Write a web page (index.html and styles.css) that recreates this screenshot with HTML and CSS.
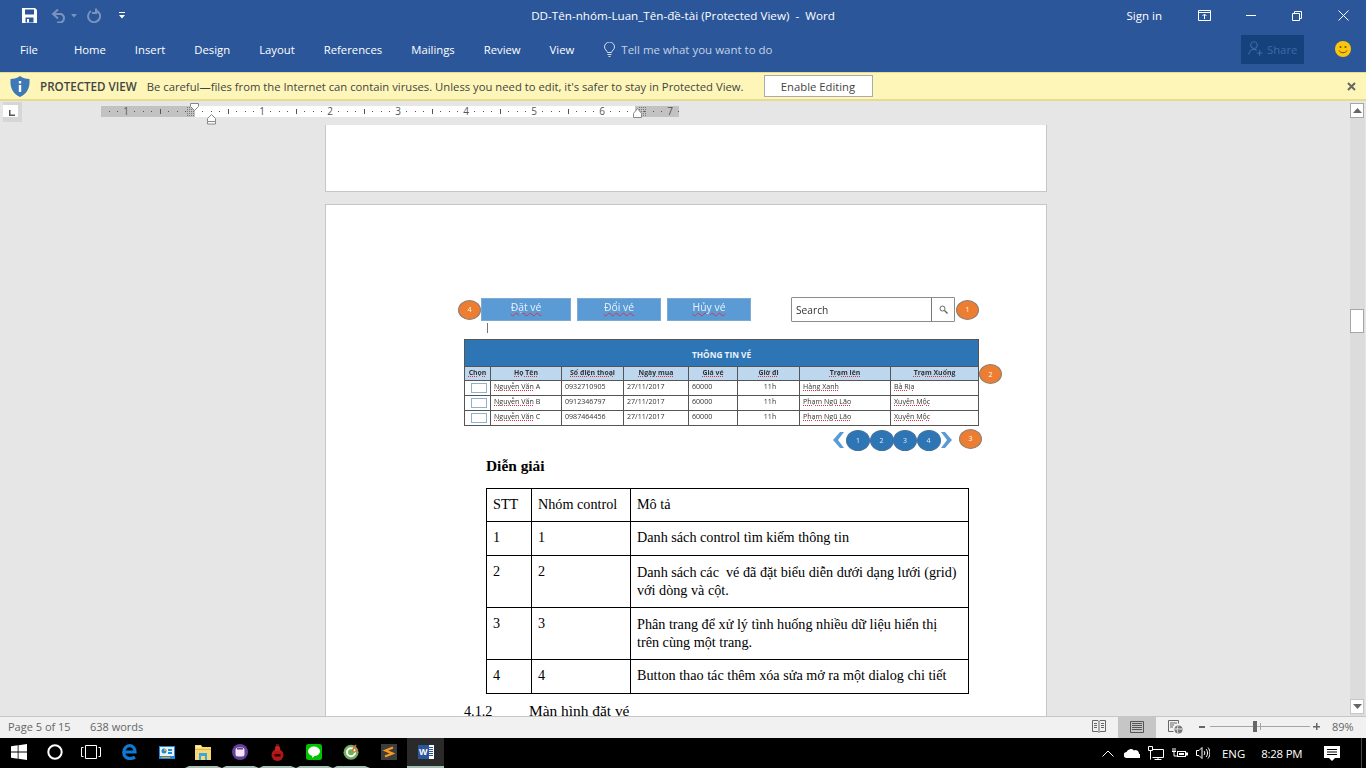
FILE: index.html
```html
<!DOCTYPE html>
<html lang="vi">
<head>
<meta charset="utf-8">
<title>DD-Tên-nhóm-Luan_Tên-đề-tài (Protected View) - Word</title>
<link rel="stylesheet" href="styles.css">
</head>
<body>
<div class="window">
  <header class="ribbon">
    <div class="titlebar">
      <div class="qat">
        <svg class="qat-save" width="15" height="15" viewBox="0 0 15 15"><path fill="#fff" d="M0 0h13l2 2v13H0z"/><path fill="#2b579a" d="M3 1.500h9v5H3zM3.500 9.500h8v5h-8z"/><path fill="#fff" d="M5 11h2v3.500H5z"/></svg>
        <svg class="qat-undo" width="16" height="15" viewBox="0 0 16 15"><path fill="none" stroke="#7a93bd" stroke-width="2" d="M7 1.500L2 6l5 4.500M2 6h8a4.500 4.500 0 0 1 0 8.500H6"/></svg>
        <svg class="qat-caret" width="6" height="4" viewBox="0 0 6 4"><path fill="#7a93bd" d="M0 0h6L3 3.500z"/></svg>
        <svg class="qat-redo" width="15" height="15" viewBox="0 0 15 15"><path fill="none" stroke="#7a93bd" stroke-width="2" d="M5 3a6 6 0 1 0 5 -.5M10 .5v4.500h-4"/></svg>
        <svg class="qat-more" width="6" height="7" viewBox="0 0 6 7"><path fill="#fff" d="M0 0h6v1H0zM0 3h6L3 6.500z"/></svg>
      </div>
      <div class="doc-title">DD-Tên-nhóm-Luan_Tên-đề-tài (Protected View)  -  Word</div>
      <div class="win-controls">
        <span class="signin">Sign in</span>
        <span class="win-btn"><svg width="14" height="11" viewBox="0 0 14 11"><path fill="none" stroke="#fff" d="M.5.500h12v10H.500zM.5 2.500h12M6.500 9V4.500M4.500 6l2-2 2 2"/></svg></span>
        <span class="win-btn"><svg width="10" height="2" viewBox="0 0 10 2"><path fill="#fff" d="M0 0h10v1H0z"/></svg></span>
        <span class="win-btn"><svg width="10" height="10" viewBox="0 0 10 10"><path fill="none" stroke="#fff" d="M.5 2.500h7v7h-7zM2.500 2.500v-2h7v7h-2"/></svg></span>
        <span class="win-btn"><svg width="11" height="11" viewBox="0 0 11 11"><path fill="none" stroke="#fff" d="M.5.500l10 10M10.500.500l-10 10"/></svg></span>
      </div>
    </div>
    <nav class="tabs">
      <span class="tab tab-file">File</span>
      <span class="tab">Home</span>
      <span class="tab">Insert</span>
      <span class="tab">Design</span>
      <span class="tab">Layout</span>
      <span class="tab">References</span>
      <span class="tab">Mailings</span>
      <span class="tab">Review</span>
      <span class="tab">View</span>
      <span class="tell">
        <svg width="11" height="15" viewBox="0 0 11 15"><path fill="none" stroke="#d5dfee" d="M3.500 10.500C3 8.500.5 7.500.5 5a5 5 0 0 1 10 0c0 2.500-2.500 3.500-3 5.500zM3.500 12.500h4M4.500 14.500h2"/></svg>
        <span>Tell me what you want to do</span>
      </span>
      <span class="share">
        <svg width="16" height="16" viewBox="0 0 20 20"><path fill="none" stroke="#3f6aa6" stroke-width="1.400" d="M7.500 1a4.200 4.200 0 1 0 .01 0zM1 17c0-4 3-6.500 6.500-6.500 1.500 0 2.500.3 3.500 1M14.500 11.500v7M11 15h7"/></svg>
        <span>Share</span>
      </span>
      <svg class="smiley" width="16" height="16" viewBox="0 0 16 16"><circle cx="8" cy="8" r="8" fill="#fcc60f"/><circle cx="5.500" cy="6" r="1" fill="#6b5200"/><circle cx="10.500" cy="6" r="1" fill="#6b5200"/><path fill="none" stroke="#6b5200" d="M4 9.500c1.500 3 6.500 3 8 0"/></svg>
    </nav>
  </header>

  <div class="protected">
    <svg class="shield" width="20" height="21" viewBox="0 0 20 21"><path fill="#3c79b6" d="M10 0c2 2 6 3 9.500 3 .5 8-1.500 14-9.500 18C2 17 0 11 .5 3 4 3 8 2 10 0z"/><path fill="#fff" d="M8.800 5h2.400v2.400H8.800zM8.800 9h2.400v7H8.800z"/></svg>
    <strong class="pv-label">PROTECTED VIEW</strong>
    <span class="pv-text">Be careful—files from the Internet can contain viruses. Unless you need to edit, it's safer to stay in Protected View.</span>
    <span class="pv-btn">Enable Editing</span>
    <svg class="pv-close" width="9" height="9" viewBox="0 0 9 9"><path fill="none" stroke="#666" stroke-width="2" d="M1 1l7 7M8 1L1 8"/></svg>
  </div>

  <div class="workspace">
    <div class="editor">
      <div class="ruler">
        <div class="ruler-corner"><svg width="6" height="6" viewBox="0 0 6 6"><path fill="#555" d="M0 0h1.500v4.500H6V6H0z"/></svg></div>
        <svg class="ruler-bar" width="600" height="24" viewBox="0 0 600 24">
          <defs>
            <pattern id="ticks" x="93" y="0" width="68" height="24" patternUnits="userSpaceOnUse">
              <rect x="8" y="10" width="1" height="1" fill="#555"/><rect x="17" y="10" width="1" height="1" fill="#555"/><rect x="25" y="10" width="1" height="1" fill="#555"/><rect x="34" y="8" width="1" height="5" fill="#555"/><rect x="42" y="10" width="1" height="1" fill="#555"/><rect x="51" y="10" width="1" height="1" fill="#555"/><rect x="59" y="10" width="1" height="1" fill="#555"/>
            </pattern>
            <pattern id="grip" width="2" height="2" patternUnits="userSpaceOnUse"><rect width="1" height="1" fill="#777"/></pattern>
          </defs>
          <rect x="0" y="5" width="578" height="11" fill="#c2c2c2"/>
          <rect x="94" y="5" width="440" height="11" fill="#fff"/>
          <rect x="0" y="5" width="578" height="11" fill="url(#ticks)"/>
          <rect x="85" y="6" width="8" height="9" fill="url(#grip)"/>
          <rect x="537" y="6" width="8" height="9" fill="url(#grip)"/>
          <g class="ruler-num">
            <text x="25" y="14">1</text><text x="161" y="14">1</text><text x="229" y="14">2</text><text x="297" y="14">3</text><text x="365" y="14">4</text><text x="433" y="14">5</text><text x="501" y="14">6</text><text x="569" y="14">7</text>
          </g>
          <path fill="#fff" stroke="#888" d="M89.500 2.500h8v3l-4 4-4-4z"/>
          <path fill="#fff" stroke="#888" d="M106.500 17.500l4-4 4 4v3h-8zM106.500 20.500v2.500h8v-2.500"/>
          <path fill="#fff" stroke="#888" d="M532.500 16.500v-4l4-5 4 5v4z"/>
        </svg>
      </div>
      <main class="doc">
        <section class="page page-prev"></section>
        <section class="page page-cur">
          <div class="mock">
            <div class="mock-tools">
              <span class="badge">4</span>
              <span class="m-btn m-btn-a"><u>Đặt vé</u></span>
              <span class="m-btn m-btn-b"><u>Đổi vé</u></span>
              <span class="m-btn m-btn-b"><u>Hủy vé</u></span>
              <span class="m-search">
                <span class="m-search-text">Search</span>
                <span class="m-search-icon"><svg width="9" height="9" viewBox="0 0 9 9"><circle cx="3.500" cy="3.500" r="2.500" fill="none" stroke="#666"/><path stroke="#666" stroke-width="1.400" d="M5.500 5.500L8.500 8.500"/></svg></span>
              </span>
              <span class="badge badge-search">1</span>
            </div>
            <div class="m-caret"></div>
            <div class="m-table-wrap">
              <table class="m-table">
                <colgroup><col class="c1"><col class="c2"><col class="c3"><col class="c4"><col class="c5"><col class="c6"><col class="c7"><col class="c8"></colgroup>
                <tr class="m-title"><th colspan="8">THÔNG TIN VÉ</th></tr>
                <tr class="m-head"><th><u>Chọn</u></th><th><u>Họ Tên</u></th><th><u>Số điện thoại</u></th><th><u>Ngày mua</u></th><th><u>Giá vé</u></th><th><u>Giờ đi</u></th><th><u>Trạm lên</u></th><th><u>Trạm Xuống</u></th></tr>
                <tr><td class="m-check"><span></span></td><td><u>Nguyễn Văn</u> A</td><td>0932710905</td><td>27/11/2017</td><td>60000</td><td class="m-center">11h</td><td><u>Hàng Xanh</u></td><td><u>Bà Rịa</u></td></tr>
                <tr><td class="m-check"><span></span></td><td><u>Nguyễn Văn</u> B</td><td>0912346797</td><td>27/11/2017</td><td>60000</td><td class="m-center">11h</td><td><u>Phạm Ngũ Lão</u></td><td><u>Xuyên Mộc</u></td></tr>
                <tr><td class="m-check"><span></span></td><td><u>Nguyễn Văn</u> C</td><td>0987464456</td><td>27/11/2017</td><td>60000</td><td class="m-center">11h</td><td><u>Phạm Ngũ Lão</u></td><td><u>Xuyên Mộc</u></td></tr>
              </table>
              <span class="badge badge-grid">2</span>
            </div>
            <div class="m-pager">
              <svg width="11" height="16" viewBox="0 0 11 16"><path fill="#5b9bd5" d="M7 0h4L5 8l6 8H7L0 8z"/></svg>
              <span class="p-dot p-first">1</span><span class="p-dot">2</span><span class="p-dot">3</span><span class="p-dot">4</span>
              <svg width="11" height="16" viewBox="0 0 11 16"><path fill="#5b9bd5" d="M4 0H0l6 8-6 8h4l7-8z"/></svg>
              <span class="badge badge-pager">3</span>
            </div>
          </div>
          <h3 class="legend-title">Diễn giải</h3>
          <table class="legend">
            <colgroup><col class="l1"><col class="l2"><col class="l3"></colgroup>
            <tr class="r33"><td>STT</td><td>Nhóm control</td><td>Mô tả</td></tr>
            <tr class="r34"><td>1</td><td>1</td><td>Danh sách control tìm kiếm thông tin</td></tr>
            <tr class="r52"><td>2</td><td>2</td><td class="low">Danh sách các  vé đã đặt biểu diễn dưới dạng lưới (grid) với dòng và cột.</td></tr>
            <tr class="r52"><td>3</td><td>3</td><td class="low">Phân trang để xử lý tình huống nhiều dữ liệu hiển thị trên cùng một trang.</td></tr>
            <tr class="r34"><td>4</td><td>4</td><td>Button thao tác thêm xóa sửa mở ra một dialog chi tiết</td></tr>
          </table>
          <h4 class="next-head"><span class="num">4.1.2</span><span class="next-name">Màn hình đặt vé</span></h4>
        </section>
      </main>
    </div>
    <aside class="scrollbar">
      <span class="sb-btn"><svg width="9" height="5" viewBox="0 0 9 5"><path fill="#666" d="M4.500 0L9 5H0z"/></svg></span>
      <span class="sb-thumb"></span>
      <span class="sb-btn sb-down"><svg width="9" height="5" viewBox="0 0 9 5"><path fill="#666" d="M0 0h9L4.500 5z"/></svg></span>
    </aside>
  </div>

  <footer class="status">
    <span class="st-page">Page 5 of 15</span>
    <span class="st-words">638 words</span>
    <span class="st-read"><svg width="14" height="13" viewBox="0 0 14 13"><path fill="none" stroke="#666" d="M.5.500h5.500l1 1 1-1h5.500v11H8l-1 1-1-1H.5zM7 1.500v10M2 3.500h3M2 5.500h3M2 7.500h3M9 3.500h3M9 5.500h3M9 7.500h3"/></svg></span>
    <span class="st-print"><svg width="14" height="12" viewBox="0 0 14 12"><path fill="none" stroke="#555" d="M.5.500h13v11H.500zM2 2.500h10M2 4.500h10M2 6.500h10M2 8.500h10"/></svg></span>
    <span class="st-web"><svg width="15" height="14" viewBox="0 0 15 14"><path fill="none" stroke="#666" d="M.5.500h10v3M.5.500v11h5M2 3h7M2 5h4M2 7h3"/><circle cx="10.500" cy="9.500" r="4" fill="#777"/><path stroke="#f1f1f1" d="M7 9h7M10 6c-1 2-1 5 0 7"/></svg></span>
    <span class="zoom-minus"></span>
    <span class="zoom-track"><span class="zoom-mid"></span><span class="zoom-thumb"></span></span>
    <span class="zoom-plus"></span>
    <span class="zoom-val">89%</span>
  </footer>

  <div class="taskbar">
    <span class="tb"><svg width="16" height="16" viewBox="0 0 16 16"><path fill="#fff" d="M0 2.300l6.700-1v6.300H0zM7.500 1.200L16 0v7.600H7.500zM0 8.400h6.700v6.300l-6.700-1zM7.500 8.400H16V16l-8.500-1.200z"/></svg></span>
    <span class="tb tb-left"><svg width="16" height="16" viewBox="0 0 16 16"><circle cx="8" cy="8" r="6.700" fill="none" stroke="#fff" stroke-width="2"/></svg></span>
    <span class="tb tb-task"><svg width="20" height="14" viewBox="0 0 20 14"><path fill="none" stroke="#fff" d="M4.500.500h11v13h-11zM2.500 2.500h-2v9h2M17.500 2.500h2v9h-2"/></svg></span>
    <span class="tb"><svg width="15" height="16" viewBox="0 0 15 16"><path fill="none" stroke="#0c7ad6" stroke-width="3.200" d="M2 8h11c0-4-2.500-6.400-5.500-6.400S1.800 4.500 1.800 8.500s3 6 6.200 6c2 0 3.800-.6 5-1.400"/></svg></span>
    <span class="tb"><svg width="16" height="13" viewBox="0 0 16 13"><rect width="16" height="13" fill="#1d8bd8"/><rect x="1" y="1" width="14" height="9" fill="#e8f2fa"/><circle cx="5" cy="5" r="2.500" fill="#1d8bd8"/><path fill="#f0a020" d="M5 5V2.500A2.500 2.500 0 0 1 7.500 5z"/><path fill="#1d8bd8" d="M9 3h4v2H9zM9 6h4v2H9z"/><path fill="#f0a020" d="M2 11h9v1H2z"/></svg></span>
    <span class="tb tb-on"><svg width="16" height="16" viewBox="0 0 16 16"><path fill="#f8d775" d="M0 1h6l1.500 2H16v13H0z"/><path fill="#fdf0c0" d="M1 2h4.500l1 1.500H1z"/><path fill="#e8b93c" d="M0 5h16v1H0z"/><path fill="#3ba7e0" d="M4 9h8v7h-2v-4H6v4H4z"/></svg></span>
    <span class="tb tb-on"><svg width="16" height="16" viewBox="0 0 16 16"><circle cx="8" cy="8" r="8" fill="#6a3d9a"/><rect x="3.500" y="3.500" width="9" height="9" rx="2.500" fill="#f0e8f5"/><path fill="#6a3d9a" d="M5 4h6v1.500H5z"/></svg></span>
    <span class="tb tb-on"><svg width="13" height="17" viewBox="0 0 13 17"><circle cx="6.500" cy="11" r="6" fill="#b01818"/><rect x="4" y="2" width="5" height="5" rx="1.500" fill="#c42020"/><rect x="5" y="0" width="3" height="2" fill="#611"/><rect x="3.500" y="10" width="6" height="2.500" fill="#300"/></svg></span>
    <span class="tb tb-on"><svg width="16" height="16" viewBox="0 0 16 16"><rect width="16" height="16" rx="2.500" fill="#00c300"/><ellipse cx="8" cy="7.300" rx="6" ry="4.800" fill="#fff"/><path fill="#fff" d="M6 11.500h3L6.500 14z"/></svg></span>
    <span class="tb tb-on"><svg width="16" height="16" viewBox="0 0 16 16"><circle cx="8" cy="8.300" r="7.500" fill="#6fae5a"/><circle cx="8" cy="8.300" r="4" fill="none" stroke="#fff" stroke-width="2"/><path stroke="#e8692c" stroke-width="1.500" d="M9 7l4-6M11 8.500l4-3"/></svg></span>
    <span class="tb"><svg width="16" height="16" viewBox="0 0 16 16"><rect width="16" height="16" fill="#3d3d3d"/><path fill="none" stroke="#f79a1e" stroke-width="2.200" d="M12 3.500L4.500 6.500l7 3-7.500 3"/></svg></span>
    <span class="tb tb-word"><svg width="16" height="16" viewBox="0 0 16 16"><rect x="5" y="1" width="11" height="14" fill="#fff"/><path stroke="#2b579a" d="M10 3.500h5M10 5.500h5M10 7.500h5M10 9.500h5M10 11.500h5"/><rect y="1" width="11" height="14" fill="#2b579a"/><text class="word-w" x="5.300" y="11">W</text></svg></span>
    <div class="tray">
      <svg class="tr-caret" width="12" height="7" viewBox="0 0 12 7"><path fill="none" stroke="#fff" d="M.5 6.500l5.500-5.500 5.500 5.500"/></svg>
      <svg class="tr-cloud" width="16" height="10" viewBox="0 0 16 10"><path fill="#fff" d="M3 10a3 3 0 0 1-.5-6A4.500 4.500 0 0 1 10 2.500a3.500 3.500 0 0 1 5 3.500 2 2 0 0 1 1 4z"/></svg>
      <svg class="tr-net" width="16" height="14" viewBox="0 0 16 14"><path fill="none" stroke="#fff" d="M4.500 3.500h11v8h-11M10 11.500v2M6.500 13.500h7M.5.500h4v4h-4zM2.500 4.500v9"/></svg>
      <svg class="tr-bat" width="16" height="11" viewBox="0 0 16 11"><path fill="#fff" d="M5 3h9v1.500h2v3h-2V9H5z"/><path fill="#000" d="M6 4h7v4H6z"/><path fill="#fff" d="M7 5h5v2H7z"/><path fill="none" stroke="#fff" d="M1 0v3M3 0v3M0 3.500h4M2 4v4h3"/></svg>
      <svg class="tr-vol" width="14" height="14" viewBox="0 0 14 14"><path fill="none" stroke="#fff" d="M.5 4.500h2.500l3-3v11l-3-3H.5zM8 5c1 1 1 3 0 4M10 3c2 2 2 6 0 8M12 1.500c2.500 3 2.500 8 0 11"/></svg>
      <span class="tr-eng">ENG</span>
      <span class="tr-time">8:28 PM</span>
      <svg class="tr-note" width="16" height="16" viewBox="0 0 16 16"><path fill="#fff" d="M0 0h16v12h-5l-3 3-3-3H0z"/><path stroke="#000" d="M3 3.500h10M3 6h10M3 8.500h10"/></svg>
      <span class="tr-edge"></span>
    </div>
  </div>
</div>
</body>
</html>
```

FILE: styles.css
```css
* { box-sizing: border-box; }
html, body { margin: 0; padding: 0; }
body { width: 1366px; height: 768px; overflow: hidden; background: #e6e6e6; font-family: "Open Sans", "Noto Sans", sans-serif; }
svg { display: block; flex: none; }
.window { width: 1366px; height: 768px; display: flex; flex-direction: column; }

/* ribbon */
.ribbon { height: 72px; background: #2b579a; color: #fff; flex: none; }
.titlebar { height: 32px; display: grid; grid-template-columns: 1fr auto 1fr; align-items: center; }
.qat { display: flex; align-items: center; padding-left: 22px; margin-top: -1px; }
.qat-undo { margin-left: 14px; }
.qat-caret { margin-left: 4px; }
.qat-redo { margin-left: 9px; }
.qat-more { margin-left: 18px; }
.doc-title { font-size: 11.65px; white-space: pre; margin-top: -1px; }
.win-controls { display: flex; align-items: center; justify-content: flex-end; margin-top: -1px; }
.signin { font-size: 11.5px; margin-right: 20px; }
.win-btn { width: 46px; height: 30px; display: flex; align-items: center; justify-content: center; }
.tabs { height: 40px; display: flex; align-items: center; padding-left: 20px; gap: 29px; padding-bottom: 6px; font-size: 11.3px; }
.tab-file { margin-right: 7px; }
.tell { display: flex; align-items: center; gap: 6px; margin-left: 1px; color: #c4d2e6; font-size: 11.5px; }
.share { margin-left: auto; width: 63px; height: 29px; background: #15417c; color: #3f6aa6; display: flex; align-items: center; gap: 3px; padding-left: 7px; }
.smiley { margin-left: 2px; margin-right: 15px; }

/* protected view */
.protected { height: 29px; flex: none; background: #fdf6b8; border-top: 1px solid #e4dc9a; border-bottom: 2px solid #e4dd90; display: flex; align-items: center; color: #444; font-size: 11.27px; padding-left: 10px; white-space: nowrap; }
.pv-label { font-weight: 600; font-size: 11.6px; margin-left: 10px; }
.pv-text { margin-left: 10px; }
.pv-btn { margin-left: 20px; width: 109px; height: 22px; background: #fff; border: 1px solid #ababab; display: flex; align-items: center; justify-content: center; }
.pv-close { margin-left: auto; margin-right: 10px; }

/* workspace */
.workspace { flex: 1; min-height: 0; display: flex; }
.editor { flex: 1; min-width: 0; display: flex; flex-direction: column; }
.ruler { height: 24px; flex: none; display: flex; background: #e6e6e6; }
.ruler-corner { width: 19px; height: 20px; margin: 1px 0 0 3px; background: #fff; border: 3px solid #d6d6d6; border-width: 3px 4px 5px 0; display: flex; align-items: flex-end; padding: 0 0 1px 6px; }
.ruler-bar { margin-left: 79px; }
.ruler-num text { font: 10px "Open Sans", sans-serif; fill: #555; text-anchor: middle; }
.doc { flex: 1; min-height: 0; overflow: hidden; padding-left: 325px; display: flex; flex-direction: column; gap: 12px; }
.page { width: 722px; background: #fff; border: 1px solid #c6c6c6; flex: none; }
.page-prev { height: 67px; border-top: 0; }
.page-cur { height: 560px; padding: 92px 0 0 132px; position: relative; }

/* mock-up picture */
.mock { filter: blur(0.35px); font-family: "Open Sans", sans-serif; }
.mock u { text-decoration: underline dotted #e0303a; text-decoration-thickness: 1px; text-underline-offset: 1px; }
.m-btn u { text-decoration: underline wavy #d8334a; text-decoration-thickness: 0.5px; }
.mock-tools { display: flex; align-items: center; height: 25px; }
.badge { width: 23px; height: 20px; border-radius: 50%; background: #ed7d31; border: 1px solid #8d8179; color: #fff; font-size: 7px; display: flex; align-items: center; justify-content: center; flex: none; }
.m-btn { height: 23px; background: #5b9bd5; border: 1px solid #7fa9cf; color: #e9f1f9; font-size: 10.4px; display: flex; align-items: center; justify-content: center; padding-bottom: 5px; margin-top: 0; }
.m-btn-a { width: 90px; }
.m-btn-b { width: 84px; margin-left: 6px; }
.m-search { width: 164px; height: 25px; margin-left: 40px; background: #fff; border: 1px solid #8c8c8c; border-radius: 1px; display: flex; align-items: center; }
.m-search-text { flex: 1; padding-left: 4px; font-size: 10.2px; color: #333; }
.m-search-icon { width: 23px; height: 100%; border-left: 1px solid #777; display: flex; align-items: center; justify-content: center; }
.badge-search { margin-left: 1px; }
.m-caret { width: 1px; height: 10px; background: #777; margin: 1px 0 0 29px; }
.m-table-wrap { position: relative; width: 514px; margin: 6px 0 0 6px; }
.m-table { border-collapse: collapse; table-layout: fixed; width: 514px; font-size: 7.1px; color: #333; }
.m-table th, .m-table td { border: 1px solid #555; padding: 0 0 0 3px; overflow: hidden; white-space: nowrap; }
.m-table td { vertical-align: top; height: 15px; line-height: 10px; }
.c1 { width: 26px; } .c2 { width: 71px; } .c3 { width: 62px; } .c4 { width: 65px; } .c5 { width: 49px; } .c6 { width: 62px; } .c7 { width: 91px; } .c8 { width: 88px; }
.m-title th { height: 27px; background: #2e75b6; color: #eaf2fa; font-size: 8.3px; font-weight: 700; text-align: center; padding: 2px 0 0; }
.m-head th { height: 14px; background: #bdd7ee; font-size: 6.9px; font-weight: 700; text-align: center; padding: 0 0 2px; line-height: 10px; }
.m-center { text-align: center; }
.m-table td.m-check { padding: 2px 0 0 6px; }
.m-check span { display: block; width: 16px; height: 10px; border: 1px solid #8fb0cf; background: #fff; }
.badge-grid { position: absolute; left: 515px; top: 25px; }
.m-pager { display: flex; align-items: center; height: 22px; margin: 3px 0 0 374px; }
.m-pager svg { margin: 0 1px; }
.p-dot { width: 24px; height: 21px; border-radius: 50%; background: #2e75b6; border: 1px solid #41719c; color: #dfeaf5; font-size: 7px; display: flex; align-items: center; justify-content: center; margin-right: -0.5px; }
.p-first { margin-left: 1px; }
.badge-pager { margin: -3px 0 0 6px; }

/* document text */
.legend-title { margin: 6px 0 0 28px; font: 700 15.4px/18px "Liberation Serif", serif; color: #000; }
.legend { border-collapse: collapse; table-layout: fixed; width: 482px; margin: 13px 0 0 28px; font: 14.2px/18px "Liberation Serif", serif; color: #000; }
.legend td { border: 1px solid #000; padding: 6px 6px 0 6px; vertical-align: top; white-space: pre-wrap; }
.legend td.low { padding: 7px 10px 0 6px; }
.l1 { width: 45px; } .l2 { width: 99px; } .l3 { width: 338px; }
.r33 td { height: 33px; } .r34 td { height: 34px; } .r52 td { height: 52px; }
.next-head { margin: 8px 0 0 6px; display: flex; font: 400 14.2px/18px "Liberation Serif", serif; color: #000; }
.num { width: 65px; }
.next-name { font-size: 15.4px; }

/* scrollbar */
.scrollbar { width: 16px; flex: none; display: flex; flex-direction: column; background: linear-gradient(#e6e6e6 16px, #dcdcdc 16px); padding-top: 2px; padding-right: 1px; border-right: 1px solid #e6e6e6; }
.sb-btn { height: 15px; flex: none; background: #fff; border: 1px solid #a6a6a6; display: flex; align-items: center; justify-content: center; }
.sb-thumb { height: 24px; flex: none; margin-top: 191px; background: #fff; border: 1px solid #a6a6a6; }
.sb-down { margin-top: auto; margin-bottom: 2px; background: #fff; border-color: #c6c6c6; }

/* status bar */
.status { height: 22px; flex: none; background: #f1f1f1; border-top: 1px solid #c6c6c6; display: flex; align-items: center; color: #666; font-size: 11px; padding: 0 0 2px 8px; }
.st-page { width: 82px; }
.st-words { width: 1002px; }
.st-read { width: 26px; display: flex; }
.st-print { width: 38px; height: 21px; margin-bottom: -2px; background: #c6c6c6; display: flex; align-items: center; justify-content: center; padding-bottom: 2px; }
.st-web { width: 43px; padding-left: 12px; display: flex; }
.zoom-minus { width: 6px; height: 2px; background: #666; }
.zoom-track { width: 100px; height: 1px; background: #a6a6a6; margin-left: 5px; position: relative; }
.zoom-mid { position: absolute; left: 50px; top: -3px; width: 1px; height: 7px; background: #a6a6a6; }
.zoom-thumb { position: absolute; left: 43px; top: -5px; width: 4px; height: 11px; background: #666; }
.zoom-plus { width: 7px; height: 7px; margin-left: 3px; background: linear-gradient(#666,#666) center/7px 1.500px no-repeat, linear-gradient(#666,#666) center/1.500px 7px no-repeat; }
.zoom-val { margin-left: 12px; }

/* taskbar */
.taskbar { height: 30px; flex: none; background: #000; display: flex; color: #fff; }
.tb { width: 37px; height: 30px; flex: none; display: flex; align-items: center; justify-content: center; border-bottom: 2px solid transparent; }
.tb-left { padding-right: 2px; }
.tb-task { padding-right: 4px; }
.tb-on { border-bottom-color: #a5c0b5; border-left: 4px solid #000; border-right: 5px solid #000; }
.tb-word { background: #2a2a2a; border-bottom-color: #a5c0b5; }
.word-w { font: 700 9px "Liberation Sans", sans-serif; fill: #fff; text-anchor: middle; }
.tray { flex: 1; display: flex; align-items: center; position: relative; }
.tr-caret { margin-left: 658px; }
.tr-cloud { margin-left: 10px; }
.tr-net { margin-left: 8px; }
.tr-bat { margin-left: 8px; }
.tr-vol { margin-left: 8px; }
.tr-eng { margin-left: 12px; font-size: 11.4px; }
.tr-time { margin-left: 16px; font-size: 11.4px; letter-spacing: -0.2px; }
.tr-note { margin-left: 22px; margin-top: 2px; }
.tr-edge { position: absolute; right: 4px; top: 0; width: 1px; height: 30px; background: #444; }
```
